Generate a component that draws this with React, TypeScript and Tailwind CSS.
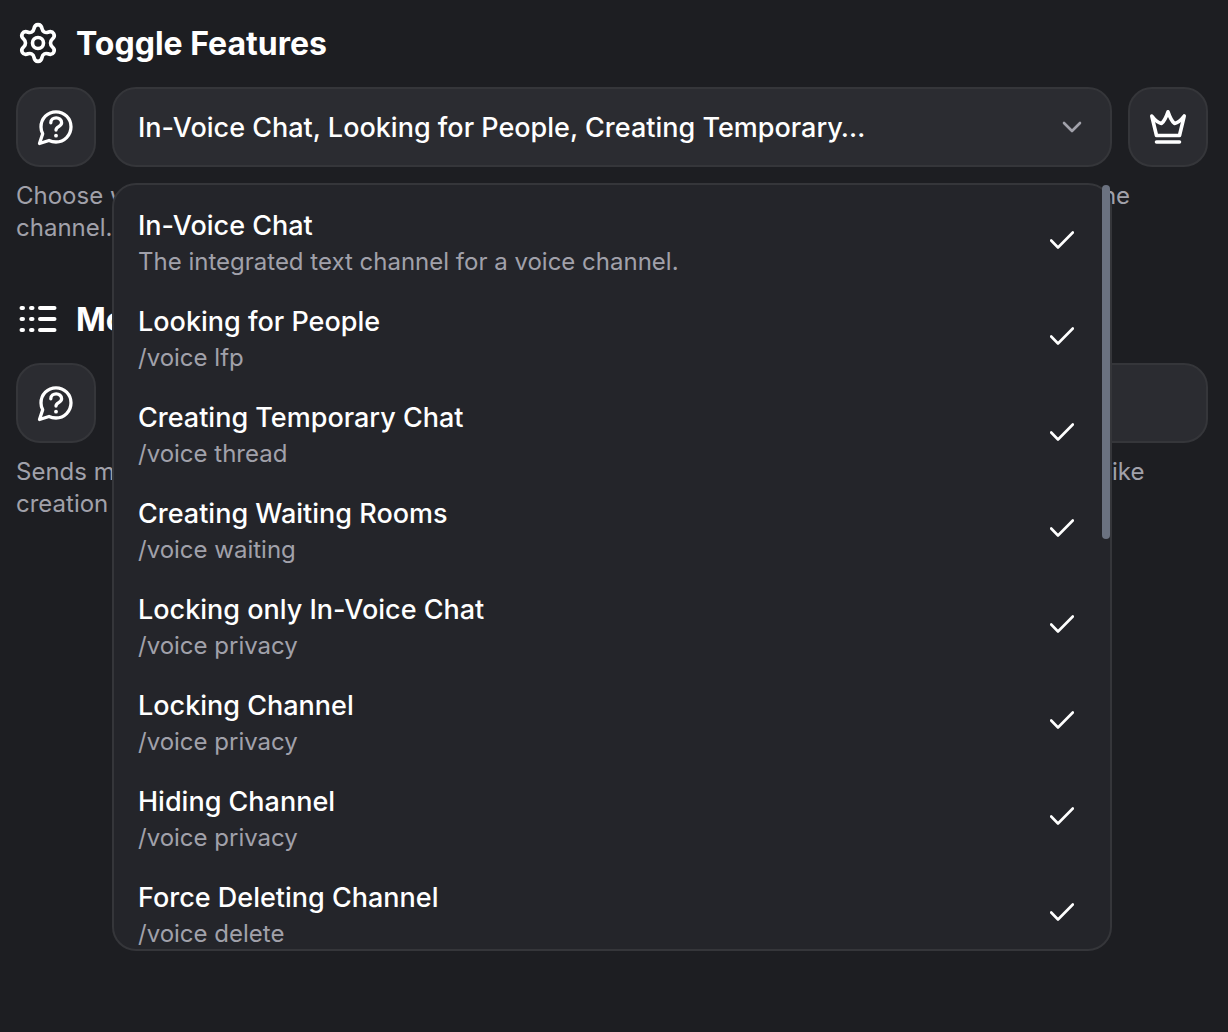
import { useState } from "react";

type Feature = { name: string; detail: string };

const features: Feature[] = [
  { name: "In-Voice Chat", detail: "The integrated text channel for a voice channel." },
  { name: "Looking for People", detail: "/voice lfp" },
  { name: "Creating Temporary Chat", detail: "/voice thread" },
  { name: "Creating Waiting Rooms", detail: "/voice waiting" },
  { name: "Locking only In-Voice Chat", detail: "/voice privacy" },
  { name: "Locking Channel", detail: "/voice privacy" },
  { name: "Hiding Channel", detail: "/voice privacy" },
  { name: "Force Deleting Channel", detail: "/voice delete" },
];

const stroke = {
  fill: "none",
  stroke: "currentColor",
  strokeWidth: 2,
  strokeLinecap: "round" as const,
  strokeLinejoin: "round" as const,
  "aria-hidden": true,
};

function GearIcon() {
  return (
    <svg viewBox="0 0 44 44" className="size-11 shrink-0" {...stroke} strokeWidth={3.6}>
      <path d="M22 2.600c2.600 0 3.700 2.100 4.100 4.300.5 2.800 3.200 4.300 5.800 3.300 2.100-.8 4.500-.8 5.800 1.500s.1 4.300-1.600 5.700c-2.100 1.900-2.100 5.300 0 7.200 1.700 1.400 2.900 3.400 1.600 5.700s-3.700 2.300-5.800 1.500c-2.600-1-5.300.5-5.800 3.300-.4 2.200-1.500 4.300-4.100 4.300s-3.700-2.100-4.100-4.300c-.5-2.800-3.200-4.300-5.800-3.300-2.100.8-4.500.8-5.800-1.500s-.1-4.300 1.600-5.700c2.100-1.900 2.100-5.300 0-7.200-1.700-1.400-2.900-3.400-1.600-5.700s3.700-2.300 5.800-1.500c2.600 1 5.300-.5 5.800-3.300.4-2.200 1.500-4.300 4.100-4.300Z" />
      <circle cx="22" cy="21" r="5.500" />
    </svg>
  );
}

function ListIcon() {
  return (
    <svg viewBox="0 0 44 44" className="size-11 shrink-0" {...stroke} strokeWidth={4}>
      <path d="M5.500 10h1.500M5.500 21h1.500M5.500 32h1.500M15 10h1.500M15 21h1.500M15 32h1.500M24 10h14.500M24 21h14.500M24 32h14.500" />
    </svg>
  );
}

function QuestionIcon() {
  return (
    <svg viewBox="0 0 40 40" className="size-10" {...stroke} strokeWidth={3.3}>
      <path d="M20 35c8.300 0 15-6.700 15-15.200S28.300 4.800 20 4.800 5 11.500 5 20c0 2.600.6 4.800 1.700 6.800L3.500 36.500l9.500-3c2.100 1 4.500 1.500 7 1.500Z" />
      <path d="M14.800 15.800c0-6.500 10.800-6.500 10.800 0 0 4.200-5.600 3.400-5.600 7.200" />
      <circle cx="20" cy="28.700" r="1.900" fill="currentColor" stroke="none" />
    </svg>
  );
}

function CrownIcon() {
  return (
    <svg viewBox="0 0 40 40" className="size-10" {...stroke} strokeWidth={3.6}>
      <path d="M8.500 28.500 3.800 9q5 6.500 9.700 7.500 3.500-3 6.500-11.700 3 8.700 6.500 11.700 4.700-1 9.700-7.500L31.500 28.500ZM8.500 35h23" />
    </svg>
  );
}

function CheckIcon() {
  return (
    <svg viewBox="0 0 24 18" className="h-[18px] w-6 shrink-0" {...stroke} strokeWidth={2.6}>
      <path d="m1.200 9.500 6.800 7L22.800 1.500" />
    </svg>
  );
}

function HelpButton({ label }: { label: string }) {
  return (
    <button type="button" aria-label={label} className="flex size-20 shrink-0 items-center justify-center rounded-3xl border-2 border-[#35363a] bg-[#2b2c31]">
      <QuestionIcon />
    </button>
  );
}

export default function App() {
  const [open, setOpen] = useState(true);
  const [selected, setSelected] = useState<string[]>(features.map((f) => f.name));
  const toggle = (name: string) =>
    setSelected((now) => (now.includes(name) ? now.filter((n) => n !== name) : [...now, name]));
  const summary = selected.slice(0, 3).join(", ").replace("Creating Temporary Chat", "Creating Temporary…");

  return (
    <main className="min-h-screen bg-[#1d1e22] px-4 pt-4 font-['Inter',sans-serif] font-medium text-white">
      <section>
        <h2 className="flex h-14 items-center gap-4 text-[32px] leading-10 font-bold">
          <GearIcon />
          Toggle Features
        </h2>
        <div className="mt-[15px] mr-1 flex gap-4">
          <HelpButton label="About features" />
          <div className="relative min-w-0 flex-1">
            <button
              type="button"
              aria-haspopup="listbox"
              aria-expanded={open}
              onClick={() => setOpen(!open)}
              className="flex h-20 w-full items-center justify-between gap-4 rounded-3xl border-2 border-[#35363a] bg-[#2b2c31] pr-7 pl-6 text-left text-[27px]"
            >
              <span className="truncate pt-0.5">{summary}</span>
              <svg viewBox="0 0 20 12" className="h-3 w-5 shrink-0 text-[#a1a1aa]" {...stroke} strokeWidth={2.6}>
                <path d="m2 2 8 8 8-8" />
              </svg>
            </button>
            {open && (
              <div className="absolute inset-x-0 top-24 z-10 h-192 rounded-3xl border-2 border-[#35363a] bg-[#24252a]">
                <ul role="listbox" aria-label="Features" aria-multiselectable="true" className="h-full overflow-y-auto rounded-3xl pt-[7px] [scrollbar-width:none]">
                  {features.map((f) => (
                    <li key={f.name} role="option" aria-selected={selected.includes(f.name)}>
                      <button type="button" onClick={() => toggle(f.name)} className="flex h-24 w-full items-center justify-between pr-9 pl-6 text-left">
                        <span className="pt-1">
                          <span className="block text-[27px] leading-10">{f.name}</span>
                          <span className="block text-2xl font-normal text-[#a1a1aa]">{f.detail}</span>
                        </span>
                        {selected.includes(f.name) && <CheckIcon />}
                      </button>
                    </li>
                  ))}
                </ul>
                <div className="absolute top-0 right-0 h-[354px] w-2 rounded-full bg-[#6b7280]" />
              </div>
            )}
          </div>
          <button type="button" aria-label="Premium" className="flex size-20 shrink-0 items-center justify-center rounded-3xl border-2 border-[#35363a] bg-[#2b2c31]">
            <CrownIcon />
          </button>
        </div>
        <p className="mt-[13px] mr-12 text-2xl font-normal text-[#a1a1aa]">
          Choose which features can be used by members who own or join the temporary voice chats in the channel.
        </p>
      </section>
      <section className="mt-12">
        <h2 className="flex h-14 items-center gap-4 text-[32px] leading-10 font-bold">
          <ListIcon />
          Moderation Logs
        </h2>
        <div className="mt-[15px] mr-1 flex gap-4">
          <HelpButton label="About logs" />
          <button type="button" aria-label="Select a log channel" className="h-20 flex-1 rounded-3xl border-2 border-[#35363a] bg-[#2b2c31]" />
        </div>
        <p className="mt-[13px] mr-12 text-2xl font-normal text-[#a1a1aa]">
          Sends moderation messages to the channel you select about all of your temporary voice events like creation
        </p>
      </section>
    </main>
  );
}
